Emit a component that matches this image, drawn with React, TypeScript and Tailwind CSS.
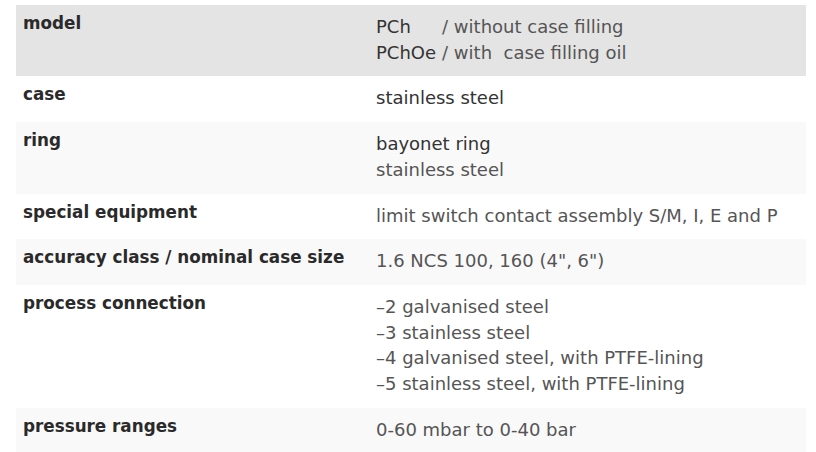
import React from "react";

type Row = { label: string; bg: string; value: React.ReactNode };

const Dark = ({ children }: { children: React.ReactNode }) => (
  <span className="text-[#333333]">{children}</span>
);

const rows: Row[] = [
  {
    label: "model",
    bg: "bg-[#e4e4e4]",
    value: (
      <div className="grid grid-cols-[auto_1fr] gap-x-[6px]">
        <Dark>PCh</Dark>
        <span>/ without case filling</span>
        <Dark>PChOe</Dark>
        <span>/ with&nbsp;&nbsp;case filling oil</span>
      </div>
    ),
  },
  { label: "case", bg: "bg-white", value: <Dark>stainless steel</Dark> },
  {
    label: "ring",
    bg: "bg-[#f9f9f9]",
    value: (
      <>
        <div>
          <Dark>bayonet ring</Dark>
        </div>
        <div>stainless steel</div>
      </>
    ),
  },
  {
    label: "special equipment",
    bg: "bg-white",
    value: "limit switch contact assembly S/M, I, E and P",
  },
  {
    label: "accuracy class / nominal case size",
    bg: "bg-[#f9f9f9]",
    value: "1.6 NCS 100, 160 (4\", 6\")",
  },
  {
    label: "process connection",
    bg: "bg-white",
    value: (
      <>
        <div>–2 galvanised steel</div>
        <div>–3 stainless steel</div>
        <div>–4 galvanised steel, with PTFE-lining</div>
        <div>–5 stainless steel, with PTFE-lining</div>
      </>
    ),
  },
  {
    label: "pressure ranges",
    bg: "bg-[#f9f9f9]",
    value: "0-60 mbar to 0-40 bar",
  },
];

export default function App() {
  return (
    <div
      className="w-[816px] h-[452px] bg-white pt-[5px] px-[16px]"
      style={{ fontFamily: '"DejaVu Sans", "Liberation Sans", sans-serif' }}
    >
      <div className="w-[790px] flex flex-col">
        {rows.map((r) => (
          <div key={r.label} className={`flex ${r.bg}`}>
            <div className="w-[353px] shrink-0 pl-[7px] pt-[6px] text-[16.8px] leading-[25.7px] font-bold text-[#2a2a2a]">
              {r.label}
            </div>
            <div className="flex-1 pl-[7px] pt-[9px] pb-[11px] text-[18px] leading-[25.7px] text-[#555555]">
              {r.value}
            </div>
          </div>
        ))}
      </div>
    </div>
  );
}
